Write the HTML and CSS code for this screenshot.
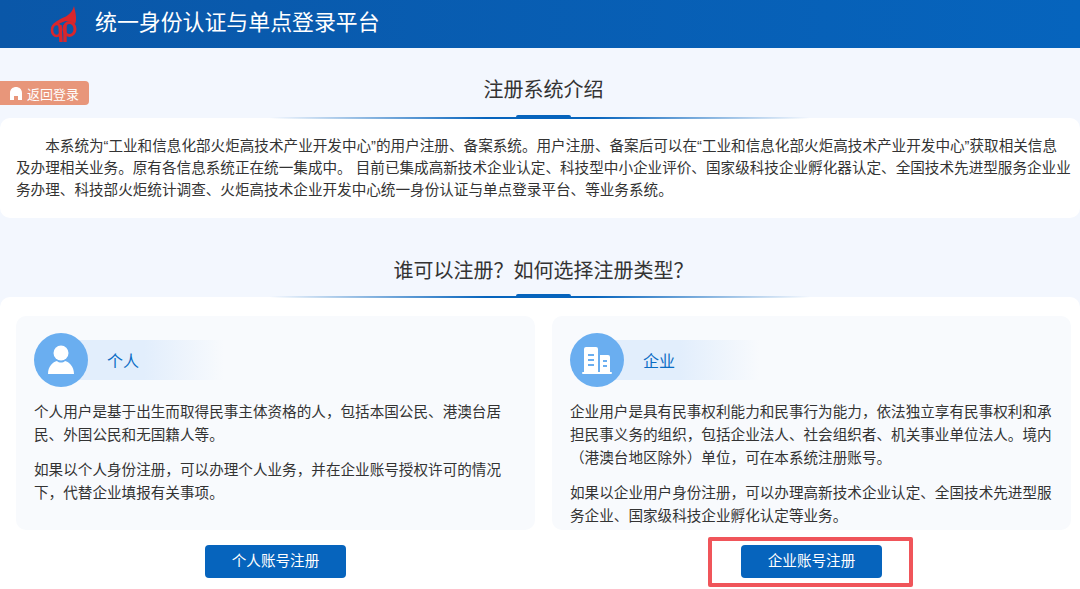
FILE: index.html
```html
<!DOCTYPE html>
<html lang="zh-CN">
<head>
    <meta charset="UTF-8">
    <title>统一身份认证与单点登录平台</title>
    <link rel="stylesheet" href="styles.css">
</head>
<body>
    <div class="navbar">
        <svg class="logo" viewBox="0 0 27 36" width="27" height="36">
            <path d="M24 0 C26 8 27 14 25 18 C22 15 16 14 13 16 C8 18 4 19 1 23 C3 14 13 13 18 9 C21 7 23 4 24 0 Z" fill="#d9262c"/>
            <ellipse cx="6.5" cy="24" rx="4.5" ry="6" fill="none" stroke="#d9262c" stroke-width="2.6"/>
            <ellipse cx="19.5" cy="23" rx="5.5" ry="6.5" fill="none" stroke="#d9262c" stroke-width="3"/>
            <path d="M10 19 L11 36 M15 19 L15 36" stroke="#d9262c" stroke-width="3.4" fill="none"/>
        </svg>
        <div class="site-name">统一身份认证与单点登录平台</div>
    </div>

    <div class="intro-head">
        <a class="back-btn" href="#">
            <svg viewBox="0 0 12 13" width="12" height="13"><path d="M6 0 C9 0 12 2 12 6 L12 13 L8 13 L8 9 L4 9 L4 13 L0 13 L0 6 C0 2 3 0 6 0 Z" fill="#fff"/></svg>
            返回登录
        </a>
        <h2 class="title">注册系统介绍</h2>
    </div>
    <div class="panel intro">
        <p>本系统为“工业和信息化部火炬高技术产业开发中心”的用户注册、备案系统。用户注册、备案后可以在“工业和信息化部火炬高技术产业开发中心”获取相关信息<br>及办理相关业务。原有各信息系统正在统一集成中。 目前已集成高新技术企业认定、科技型中小企业评价、国家级科技企业孵化器认定、全国技术先进型服务企业业<br>务办理、科技部火炬统计调查、火炬高技术企业开发中心统一身份认证与单点登录平台、等业务系统。</p>
    </div>

    <h2 class="title second">谁可以注册？如何选择注册类型？</h2>
    <div class="panel types">
        <div class="type-col">
            <div class="card">
                <div class="card-head">
                    <div class="circle">
                        <svg viewBox="0 0 26 30" width="26" height="30"><circle cx="13" cy="8" r="7.5" fill="#fff"/><path d="M0 29 C0 21 5 17 9 16 C11 18 15 18 17 16 C21 17 26 21 26 29 Z" fill="#fff"/></svg>
                    </div>
                    <div class="card-name">个人</div>
                </div>
                <p>个人用户是基于出生而取得民事主体资格的人，包括本国公民、港澳台居民、外国公民和无国籍人等。</p>
                <p>如果以个人身份注册，可以办理个人业务，并在企业账号授权许可的情况下，代替企业填报有关事项。</p>
            </div>
            <div class="btn-row"><a class="reg-btn" href="#">个人账号注册</a></div>
        </div>
        <div class="type-col">
            <div class="card">
                <div class="card-head">
                    <div class="circle">
                        <svg viewBox="0 0 30 27" width="30" height="27">
                            <path d="M2 27 L2 2 Q2 0 4 0 L14 0 Q16 0 16 2 L16 27 Z M18 27 L18 8 L26 8 Q28 8 28 10 L28 27 Z" fill="#fff"/>
                            <path d="M6 8 H12 M6 13 H12 M6 18 H12 M21 14 H25 M21 19 H25" stroke="#6aaef0" stroke-width="2"/>
                            <rect x="0" y="25" width="30" height="2" rx="1" fill="#fff"/>
                        </svg>
                    </div>
                    <div class="card-name">企业</div>
                </div>
                <p>企业用户是具有民事权利能力和民事行为能力，依法独立享有民事权利和承担民事义务的组织，包括企业法人、社会组织者、机关事业单位法人。境内（港澳台地区除外）单位，可在本系统注册账号。</p>
                <p>如果以企业用户身份注册，可以办理高新技术企业认定、全国技术先进型服务企业、国家级科技企业孵化认定等业务。</p>
            </div>
            <div class="btn-row marked"><a class="reg-btn" href="#">企业账号注册</a></div>
        </div>
    </div>
</body>
</html>
```

FILE: styles.css
```css
body {
    font-family: "Liberation Sans", "Noto Sans CJK SC", sans-serif;
    margin: 0;
    padding: 0;
    background-color: #f3f7fe;
    color: #333;
    height: 589px;
    overflow: hidden;
}
/* Navbar */
.navbar {
    height: 48px;
    background: linear-gradient(90deg, #0a57a8, #0664bd);
    display: flex;
    align-items: center;
    padding-left: 50px;
    overflow: hidden;
}
.logo {
    flex-shrink: 0;
}
.site-name {
    margin-left: 18px;
    padding-bottom: 3px;
    color: #fff;
    font-size: 21.9px;
    line-height: 42px;
}
/* Titles */
.title {
    margin: 0;
    padding-left: 7px;
    font-size: 20px;
    font-weight: 400;
    line-height: 30px;
    color: #333;
    text-align: center;
}
.intro-head {
    position: relative;
    height: 70px;
    box-sizing: border-box;
    padding-top: 27px;
}
.back-btn {
    position: absolute;
    left: 0;
    top: 33px;
    width: 89px;
    height: 24px;
    display: flex;
    align-items: center;
    gap: 5px;
    box-sizing: border-box;
    padding-left: 10px;
    background-color: #e8967a;
    border-radius: 0 4px 4px 0;
    color: #fff;
    font-size: 13px;
    text-decoration: none;
}
.second {
    margin-top: 38px;
    height: 41px;
}
/* Panels */
.panel {
    position: relative;
    background-color: #fff;
    border-radius: 10px;
}
.panel::before {
    content: "";
    position: absolute;
    left: 270px;
    right: 270px;
    top: -1px;
    height: 2px;
    background: linear-gradient(90deg, rgba(6, 100, 189, 0), #0664bd 40%, #0664bd 60%, rgba(6, 100, 189, 0));
}
.panel::after {
    content: "";
    position: absolute;
    left: 516px;
    width: 55px;
    top: -3px;
    height: 3px;
    background-color: #0664bd;
    border-radius: 2px 2px 0 0;
}
.intro {
    height: 100px;
    box-sizing: border-box;
    padding: 17px 0 0 16px;
}
.intro p {
    margin: 0;
    font-size: 14.6px;
    line-height: 22px;
    text-indent: 2em;
    white-space: nowrap;
}
.types {
    height: 292px;
    display: flex;
    justify-content: space-between;
    padding: 19px 9px 0 16px;
    border-radius: 10px 10px 0 0;
}
.type-col {
    width: 519px;
}
/* Card */
.card {
    height: 214px;
    box-sizing: border-box;
    padding: 17px 18px 0;
    background-color: #f8fafd;
    border-radius: 10px;
}
.card p {
    margin: 0 0 12px;
    font-size: 14.6px;
    line-height: 23px;
}
.card-head {
    display: flex;
    align-items: center;
    height: 54px;
    margin-bottom: 14px;
    background: linear-gradient(90deg, #e2eefc, #e2eefc 50%, rgba(226, 238, 252, 0));
    background-size: 160px 40px;
    background-position: 30px center;
    background-repeat: no-repeat;
}
.circle {
    width: 54px;
    height: 54px;
    flex-shrink: 0;
    border-radius: 50%;
    background-color: #6aaef0;
    display: flex;
    align-items: center;
    justify-content: center;
}
.card-name {
    margin-left: 19px;
    font-size: 16px;
    color: #0a6cc4;
}
/* Buttons */
.btn-row {
    display: flex;
    justify-content: center;
    padding-top: 15px;
}
.reg-btn {
    width: 141px;
    height: 33px;
    line-height: 33px;
    text-align: center;
    background-color: #0664bd;
    border-radius: 4px;
    color: #fff;
    font-size: 14.6px;
    text-decoration: none;
}
.marked {
    position: relative;
}
.marked::after {
    content: "";
    position: absolute;
    left: 156px;
    top: 7px;
    width: 205px;
    height: 50px;
    box-sizing: border-box;
    border: 4px solid #f0555a;
    border-radius: 2px;
}
```
